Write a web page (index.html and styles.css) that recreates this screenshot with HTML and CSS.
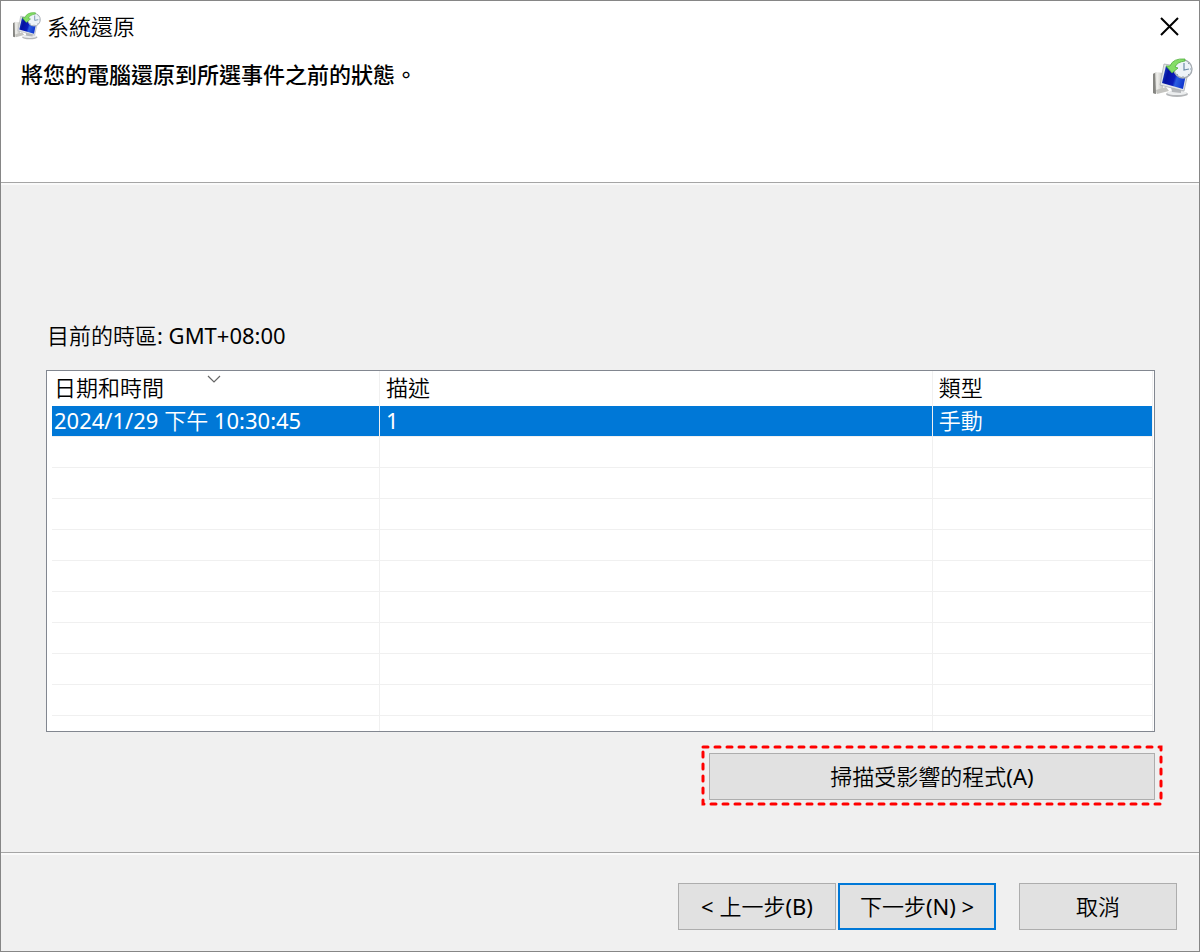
FILE: index.html
```html
<!DOCTYPE html>
<html lang="zh-Hant">
<head>
    <meta charset="UTF-8">
    <meta name="viewport" content="width=device-width, initial-scale=1.0">
    <title>系統還原</title>
    <link rel="stylesheet" href="styles.css">
</head>
<body>
    <!-- Shared icon -->
    <svg class="defs" width="0" height="0" aria-hidden="true">
        <defs>
            <linearGradient id="screenFill" x1="0" y1="0" x2="1" y2="0.3">
                <stop offset="0" stop-color="#2456d8"/>
                <stop offset="0.3" stop-color="#0512a0"/>
                <stop offset="0.6" stop-color="#0a1cbc"/>
                <stop offset="0.7" stop-color="#2a5ee0"/>
                <stop offset="1" stop-color="#1238d0"/>
            </linearGradient>
            <linearGradient id="caseFill" x1="0" y1="0" x2="1" y2="0">
                <stop offset="0" stop-color="#a0a09c"/>
                <stop offset="0.4" stop-color="#f1f1ee"/>
                <stop offset="1" stop-color="#c4c4c0"/>
            </linearGradient>
            <symbol id="restoreIcon" viewBox="0 0 40 40">
                <path d="M0 16 L3 14 L10 15 L10 33 L2 36 L0 35 Z" fill="url(#caseFill)"/>
                <path d="M0 16 L2 15 L3 36 L0 35 Z" fill="#858581"/>
                <path d="M3 32 L13 29 L16 33 L4 36 Z" fill="#c4c4c0"/>
                <ellipse cx="24" cy="36" rx="11" ry="3" fill="#b4b6b8"/>
                <ellipse cx="24" cy="35" rx="10" ry="2" fill="#eceeef"/>
                <path d="M18 29 L28 31 L28 35 L19 34 Z" fill="#b5b8bb"/>
                <path d="M11 6 L36 10 L31 33 L7 27 Z" fill="#e3e6e9" stroke="#a9adb1" stroke-width="0.8"/>
                <path d="M13 8 L34 11 L30 31 L9 25 Z" fill="url(#screenFill)"/>
                <circle cx="30" cy="11" r="9" fill="#edf3f8" stroke="#a7adb3" stroke-width="1.4"/>
                <path d="M31 5 L31 12 L36 11" fill="none" stroke="#6c8ba8" stroke-width="1.2"/>
                <path d="M37 11 h1 M30 18 v1 M35 6 l1 -1 M35 16 l1 1 M25 16 l-1 1" stroke="#8ba0b3" stroke-width="1"/>
                <path d="M32 1 Q20 0 17 8 L13 8 L19 15 L25 10 L22 9 Q24 4 32 3 Z" fill="#84dd66" stroke="#4fae3b" stroke-width="0.8"/>
            </symbol>
        </defs>
    </svg>

    <div class="window">
        <header class="header">
            <div class="title-bar">
                <svg class="title-icon" aria-hidden="true"><use href="#restoreIcon"/></svg>
                <span class="title">系統還原</span>
                <button class="close-btn" type="button" aria-label="關閉">
                    <svg width="20" height="20" viewBox="0 0 20 20" aria-hidden="true">
                        <path d="M2 2 L19 19 M19 2 L2 19" fill="none" stroke="#000" stroke-width="2"/>
                    </svg>
                </button>
            </div>
            <div class="heading-row">
                <h1 class="heading">將您的電腦還原到所選事件之前的狀態。</h1>
                <svg class="heading-icon" aria-hidden="true"><use href="#restoreIcon"/></svg>
            </div>
        </header>

        <main class="content">
            <p class="timezone">目前的時區: GMT+08:00</p>

            <div class="list-box">
                <table class="restore-list">
                    <colgroup>
                        <col class="col-date">
                        <col class="col-desc">
                        <col class="col-type">
                    </colgroup>
                    <thead>
                        <tr>
                            <th scope="col" aria-sort="descending">日期和時間
                                <svg class="sort-arrow" width="14" height="8" viewBox="0 0 14 8" aria-hidden="true">
                                    <path d="M1 1 L7 7 L13 1" fill="none" stroke="#666" stroke-width="1.2"/>
                                </svg>
                            </th>
                            <th scope="col">描述</th>
                            <th scope="col">類型</th>
                        </tr>
                    </thead>
                    <tbody>
                        <tr class="selected"><td>2024/1/29 下午 10:30:45</td><td>1</td><td>手動</td></tr>
                        <tr><td></td><td></td><td></td></tr>
                        <tr><td></td><td></td><td></td></tr>
                        <tr><td></td><td></td><td></td></tr>
                        <tr><td></td><td></td><td></td></tr>
                        <tr><td></td><td></td><td></td></tr>
                        <tr><td></td><td></td><td></td></tr>
                        <tr><td></td><td></td><td></td></tr>
                        <tr><td></td><td></td><td></td></tr>
                        <tr><td></td><td></td><td></td></tr>
                        <tr class="cut"><td></td><td></td><td></td></tr>
                    </tbody>
                </table>
            </div>

            <div class="scan">
                <button class="btn scan-btn" type="button">掃描受影響的程式(A)</button>
                <svg class="scan-outline" aria-hidden="true">
                    <rect width="100%" height="100%"/>
                </svg>
            </div>
        </main>

        <footer class="footer">
            <button class="btn" type="button">&lt; 上一步(B)</button>
            <button class="btn primary" type="button">下一步(N) &gt;</button>
            <button class="btn cancel" type="button">取消</button>
        </footer>
    </div>
</body>
</html>
```
FILE: styles.css
```css
:root {
    --face: #f0f0f0;
    --line: #f0f0f0;
    --accent: #0078d7;
}

* {
    margin: 0;
    padding: 0;
    box-sizing: border-box;
}

body {
    background: var(--face);
    color: #000;
    font-family: "Noto Sans", "Noto Sans CJK TC DemiLight", "Noto Sans CJK TC Light", "Noto Sans CJK TC", sans-serif;
    font-size: 22px;
    font-weight: 400;
    line-height: 30px;
}

button {
    font: inherit;
    color: inherit;
}

.defs {
    position: absolute;
}

.window {
    min-height: 100vh;
    display: flex;
    flex-direction: column;
    border: 1px solid #868686;
}

/* Header */
.header {
    min-height: 182px;
    background: #fff;
    border-bottom: 1px solid #a5a5a5;
}

.title-bar {
    display: flex;
    align-items: center;
    height: 50px;
    padding: 0 20px 0 12px;
}

.title-icon {
    width: 28px;
    height: 28px;
    margin-right: 6px;
}

.close-btn {
    display: flex;
    margin-left: auto;
    border: none;
    background: transparent;
}

.heading-row {
    display: flex;
    justify-content: space-between;
    align-items: flex-start;
    padding: 7px 6px 0 20px;
}

.heading {
    font-family: "Noto Sans CJK TC", sans-serif;
    font-size: 22px;
    font-weight: 500;
}

.heading-icon {
    width: 40px;
    height: 40px;
}

/* Content */
.content {
    flex: 1;
    padding: 135px 44px 44px 45px;
    border-top: 2px solid #fafafa;
}

.timezone {
    margin-bottom: 20px;
    padding-left: 1px;
}

.list-box {
    padding: 0 1px 0 5px;
    background: #fff;
    border: 1px solid #828790;
}

.restore-list {
    width: 100%;
    table-layout: fixed;
    border-collapse: separate;
    border-spacing: 0;
}

.col-date {
    width: 328px;
}

.col-type {
    width: 20%;
}

.restore-list th,
.restore-list td {
    height: 31px;
    padding: 0 6px;
    border-right: 1px solid var(--line);
    border-bottom: 1px solid var(--line);
    font-weight: 400;
    line-height: 28px;
    text-align: left;
    white-space: nowrap;
}

.restore-list td {
    padding-bottom: 2px;
}

.restore-list th {
    position: relative;
    height: 35px;
    padding-bottom: 4px;
    border-bottom: none;
}

.restore-list td:first-child,
.restore-list th:first-child {
    padding-left: 2px;
}

.restore-list .selected td {
    background: var(--accent);
    background-clip: padding-box;
    color: #fff;
}

.restore-list .cut td {
    height: 15px;
    border-bottom: none;
}

.sort-arrow {
    position: absolute;
    top: 4px;
    left: 50%;
    margin-left: -9px;
}

/* Buttons */
.btn {
    width: 158px;
    height: 47px;
    padding-bottom: 2px;
    background: #e1e1e1;
    border: 1px solid #adadad;
}

.primary {
    border: 2px solid var(--accent);
}

.scan {
    position: relative;
    width: 446px;
    margin: 21px 0 0 auto;
}

.scan-btn {
    display: block;
    width: 100%;
}

.scan-outline {
    position: absolute;
    top: -6px;
    left: -6px;
    width: calc(100% + 12px);
    height: calc(100% + 10px);
    overflow: visible;
    pointer-events: none;
}

.scan-outline rect {
    fill: none;
    stroke: #f00;
    stroke-width: 3;
    stroke-dasharray: 5 7;
    stroke-linecap: round;
}

/* Footer */
.footer {
    display: flex;
    justify-content: flex-end;
    gap: 2px;
    padding: 30px 22px 21px;
    border-top: 1px solid #a5a5a5;
    box-shadow: inset 0 2px 0 #fafafa;
}

.cancel {
    margin-left: 21px;
}
```
